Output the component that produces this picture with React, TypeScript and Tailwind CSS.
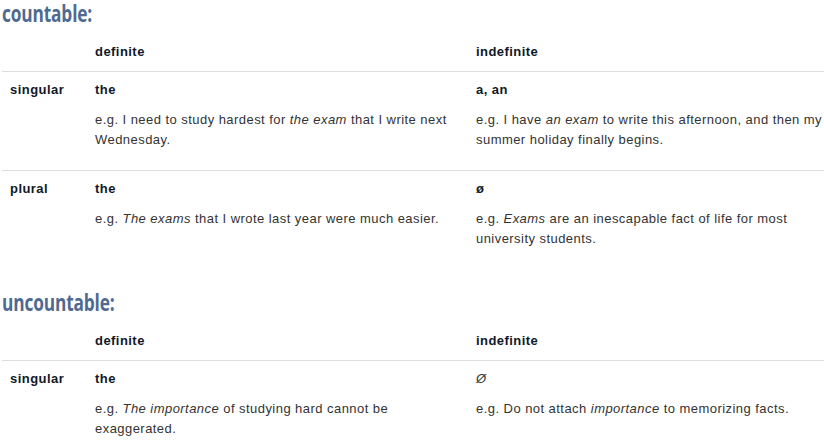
import type { ReactNode } from "react";

type Row = {
  label: string;
  def: string;
  defEx: ReactNode;
  indef: string;
  indefEx: ReactNode;
  indefLight?: boolean;
};

const countable: Row[] = [
  {
    label: "singular",
    def: "the",
    defEx: (
      <>
        e.g. I need to study hardest for <i>the exam</i> that I write next Wednesday.
      </>
    ),
    indef: "a, an",
    indefEx: (
      <>
        e.g. I have <i>an exam</i> to write this afternoon, and then my summer holiday finally begins.
      </>
    ),
  },
  {
    label: "plural",
    def: "the",
    defEx: (
      <>
        e.g. <i>The exams</i> that I wrote last year were much easier.
      </>
    ),
    indef: "ø",
    indefEx: (
      <>
        e.g. <i>Exams</i> are an inescapable fact of life for most university students.
      </>
    ),
  },
];

const uncountable: Row[] = [
  {
    label: "singular",
    def: "the",
    defEx: (
      <>
        e.g. <i>The importance</i> of studying hard cannot be exaggerated.
      </>
    ),
    indef: "Ø",
    indefEx: (
      <>
        e.g. Do not attach <i>importance</i> to memorizing facts.
      </>
    ),
    indefLight: true,
  },
];

const cols = "grid grid-cols-[83px_381px_1fr]";

function Table({ title, rows }: { title: string; rows: Row[] }) {
  return (
    <div>
      <h2 className="h-[26px] text-[24px] leading-[26px] font-bold tracking-[-0.2px] text-[#4f6a90] font-['Open_Sans',sans-serif]">
        <span className="inline-block origin-left scale-x-[0.72]">{title}</span>
      </h2>
      <div className={`${cols} border-b border-[#dddddd] pt-4 pb-[9px]`}>
        <div />
        <div className="pl-[10px] font-bold text-[#111827]">definite</div>
        <div className="pl-[10px] font-bold text-[#111827]">indefinite</div>
      </div>
      {rows.map((r, i) => (
        <div
          key={r.label}
          className={`${cols} pt-2 pb-5 ${i < rows.length - 1 ? "border-b border-[#dddddd]" : ""}`}
        >
          <div className="pl-2 font-bold text-[#111827]">{r.label}</div>
          <div className="pl-[10px] pr-[10px]">
            <div className="font-bold text-[#111827]">{r.def}</div>
            <p className="mt-[10px]">{r.defEx}</p>
          </div>
          <div className="pl-[10px]">
            <div className={r.indefLight ? "italic" : "font-bold text-[#111827]"}>{r.indef}</div>
            <p className="mt-[10px]">{r.indefEx}</p>
          </div>
        </div>
      ))}
    </div>
  );
}

export default function App() {
  return (
    <div className="w-[824px] h-[444px] overflow-hidden bg-white pl-[2px] text-[13px] leading-5 tracking-[0.45px] text-[#333333] font-['Liberation_Sans',Arial,sans-serif]">
      <Table title="countable:" rows={countable} />
      <div className="mt-5">
        <Table title="uncountable:" rows={uncountable} />
      </div>
    </div>
  );
}
